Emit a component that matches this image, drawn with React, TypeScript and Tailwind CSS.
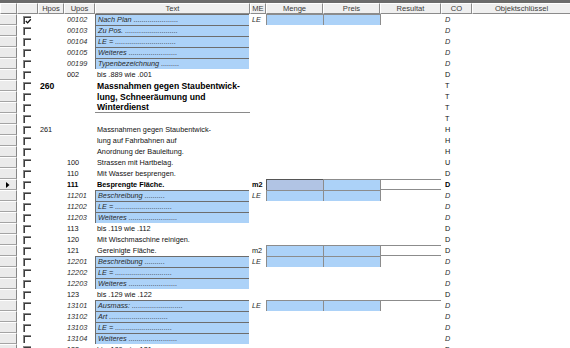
import React from 'react';

type Kind = 'input' | 'plain' | 'bold' | 'heading' | 'empty';
type Sty = 'italic' | 'normal' | 'bold';
interface Row {
  chk?: boolean;
  sel?: boolean;
  hpos?: string;
  hposBold?: boolean;
  upos?: string;
  uposStyle?: Sty;
  text?: string;
  kind: Kind;
  underline?: boolean;
  me?: string;
  meStyle?: Sty;
  fields?: boolean;
  focused?: boolean;
  result?: 'left' | 'box' | 'topleft';
  co: string;
  coStyle: Sty;
}

const d = (n: number) => '.'.repeat(n);

const rows: Row[] = [
  { chk: true, upos: '00102', uposStyle: 'italic', text: 'Nach Plan ' + d(22), kind: 'input', me: 'LE', meStyle: 'italic', fields: true, result: 'left', co: 'D', coStyle: 'italic' },
  { upos: '00103', uposStyle: 'italic', text: 'Zu Pos. ' + d(26), kind: 'input', co: 'D', coStyle: 'italic' },
  { upos: '00104', uposStyle: 'italic', text: 'LE = ' + d(30), kind: 'input', co: 'D', coStyle: 'italic' },
  { upos: '00105', uposStyle: 'italic', text: 'Weiteres ' + d(24), kind: 'input', co: 'D', coStyle: 'italic' },
  { upos: '00199', uposStyle: 'italic', text: 'Typenbezeichnung ' + d(9), kind: 'input', co: 'D', coStyle: 'italic' },
  { upos: '002', uposStyle: 'normal', text: 'bis .889 wie .001', kind: 'plain', co: 'D', coStyle: 'normal' },
  { hpos: '260', hposBold: true, text: 'Massnahmen gegen Staubentwick-', kind: 'heading', co: 'T', coStyle: 'normal' },
  { text: 'lung, Schneeräumung und', kind: 'heading', co: 'T', coStyle: 'normal' },
  { text: 'Winterdienst', kind: 'heading', underline: true, co: 'T', coStyle: 'normal' },
  { kind: 'empty', co: 'T', coStyle: 'normal' },
  { hpos: '261', text: 'Massnahmen gegen Staubentwick-', kind: 'plain', co: 'H', coStyle: 'normal' },
  { text: 'lung auf Fahrbahnen auf', kind: 'plain', co: 'H', coStyle: 'normal' },
  { text: 'Anordnung der Bauleitung.', kind: 'plain', co: 'H', coStyle: 'normal' },
  { upos: '100', uposStyle: 'normal', text: 'Strassen mit Hartbelag.', kind: 'plain', co: 'U', coStyle: 'normal' },
  { upos: '110', uposStyle: 'normal', text: 'Mit Wasser besprengen.', kind: 'plain', co: 'D', coStyle: 'normal' },
  { sel: true, upos: '111', uposStyle: 'bold', text: 'Besprengte Fläche.', kind: 'bold', me: 'm2', meStyle: 'bold', fields: true, focused: true, result: 'box', co: 'D', coStyle: 'bold' },
  { upos: '11201', uposStyle: 'italic', text: 'Beschreibung ' + d(10), kind: 'input', me: 'LE', meStyle: 'italic', fields: true, result: 'left', co: 'D', coStyle: 'italic' },
  { upos: '11202', uposStyle: 'italic', text: 'LE = ' + d(28), kind: 'input', co: 'D', coStyle: 'italic' },
  { upos: '11203', uposStyle: 'italic', text: 'Weiteres ' + d(24), kind: 'input', co: 'D', coStyle: 'italic' },
  { upos: '113', uposStyle: 'normal', text: 'bis .119 wie .112', kind: 'plain', co: 'D', coStyle: 'normal' },
  { upos: '120', uposStyle: 'normal', text: 'Mit Wischmaschine reinigen.', kind: 'plain', co: 'D', coStyle: 'normal' },
  { upos: '121', uposStyle: 'normal', text: 'Gereinigte Fläche.', kind: 'plain', me: 'm2', meStyle: 'normal', fields: true, result: 'box', co: 'D', coStyle: 'normal' },
  { upos: '12201', uposStyle: 'italic', text: 'Beschreibung ' + d(10), kind: 'input', me: 'LE', meStyle: 'italic', fields: true, result: 'left', co: 'D', coStyle: 'italic' },
  { upos: '12202', uposStyle: 'italic', text: 'LE = ' + d(28), kind: 'input', co: 'D', coStyle: 'italic' },
  { upos: '12203', uposStyle: 'italic', text: 'Weiteres ' + d(24), kind: 'input', co: 'D', coStyle: 'italic' },
  { upos: '123', uposStyle: 'normal', text: 'bis .129 wie .122', kind: 'plain', co: 'D', coStyle: 'normal' },
  { upos: '13101', uposStyle: 'italic', text: 'Ausmass: ' + d(25), kind: 'input', me: 'LE', meStyle: 'italic', fields: true, result: 'topleft', co: 'D', coStyle: 'italic' },
  { upos: '13102', uposStyle: 'italic', text: 'Art ' + d(29), kind: 'input', co: 'D', coStyle: 'italic' },
  { upos: '13103', uposStyle: 'italic', text: 'LE = ' + d(28), kind: 'input', co: 'D', coStyle: 'italic' },
  { upos: '13104', uposStyle: 'italic', text: 'Weiteres ' + d(24), kind: 'input', co: 'D', coStyle: 'italic' },
  { upos: '132', uposStyle: 'normal', text: 'bis .189 wie .131', kind: 'plain', co: 'D', coStyle: 'normal' },
];

const styCls = (s?: Sty) =>
  s === 'italic' ? 'italic text-[#2e2e2e]' : s === 'bold' ? 'font-bold text-black' : 'text-[#111]';

function Checkbox({ checked }: { checked?: boolean }) {
  return (
    <div className="ml-[6px] w-[8px] h-[8px] border-t border-l border-[#8a8a8a] bg-white">
      <div className="w-full h-full border-t border-l border-[#3c3c3c] relative">
        {checked && (
          <svg width="7" height="7" viewBox="0 0 7 7" className="absolute left-0 top-0">
            <path d="M0.8 3 L2.6 4.9 L5.8 1.2" fill="none" stroke="#111" strokeWidth="1.3" />
          </svg>
        )}
      </div>
    </div>
  );
}

function HeaderCell({ w, label, last }: { w: string; label?: string; last?: boolean }) {
  return (
    <div
      className={`${w} h-full bg-[#efefef] border-t border-l border-t-white border-l-white ${last ? '' : 'border-r'} border-b border-r-[#8b8b8b] border-b-[#8b8b8b] flex items-center justify-center text-[7.6px] leading-[10px] text-[#3a3a3a]`}
    >
      {label}
    </div>
  );
}

function DataRow({ r }: { r: Row }) {
  return (
    <div className="flex h-[11px] text-[7.3px] leading-[10px]">
      <div className="w-[17px] h-full shrink-0 bg-[#ebebeb] border-t border-t-white border-r border-b border-r-[#858585] border-b-[#a4a4a4] flex items-center pl-[6px]">
        {r.sel && (
          <svg width="4" height="6" viewBox="0 0 4 6">
            <polygon points="0,0 3.5,3 0,6" fill="#000" />
          </svg>
        )}
      </div>
      <div className="w-[21px] h-full shrink-0 bg-white flex items-center">
        <Checkbox checked={r.chk} />
      </div>
      <div
        className={`w-[26px] h-full shrink-0 pl-[2px] flex items-center ${r.hposBold ? 'font-bold text-[8.6px] text-black' : 'text-[#111]'}`}
      >
        {r.hpos}
      </div>
      <div className={`w-[31px] h-full shrink-0 pl-[3px] flex items-center ${styCls(r.uposStyle)}`}>{r.upos}</div>
      <div className="w-[155px] h-full shrink-0">
        {r.kind === 'input' && (
          <div className="w-[154px] h-full bg-[#acd2f8] border-t border-l border-[#6d6d6d] pl-[2px] flex items-center italic text-[#2a2a2a] whitespace-nowrap overflow-hidden">
            {r.text}
          </div>
        )}
        {r.kind === 'plain' && (
          <div className="h-full pl-[2px] flex items-center text-[#111] whitespace-nowrap">{r.text}</div>
        )}
        {r.kind === 'bold' && (
          <div className="h-full pl-[2px] flex items-center font-bold text-black whitespace-nowrap">{r.text}</div>
        )}
        {r.kind === 'heading' && (
          <div
            className={`h-full pl-[2px] flex items-center font-bold text-[8.6px] text-black whitespace-nowrap ${r.underline ? 'border-b border-[#8a8a8a]' : ''}`}
          >
            {r.text}
          </div>
        )}
      </div>
      <div className={`w-[16px] h-full shrink-0 pl-[2px] flex items-center ${styCls(r.meStyle)}`}>{r.me}</div>
      <div className="w-[57px] h-full shrink-0">
        {r.fields &&
          (r.focused ? (
            <div className="w-full h-full bg-[#b1c4e4] border-t border-l border-[#555555]" />
          ) : (
            <div className="w-full h-full bg-[#acd2f8] border-t border-l border-[#8c8c8c]" />
          ))}
      </div>
      <div className="w-[57px] h-full shrink-0">
        {r.fields && <div className="w-full h-full bg-[#acd2f8] border-t border-l border-[#8c8c8c]" />}
      </div>
      <div className="w-[61px] h-full shrink-0">
        {r.result === 'left' && <div className="w-full h-full border-l border-[#8c8c8c]" />}
        {r.result === 'box' && <div className="w-full h-full border-l border-t border-b border-[#8c8c8c] bg-white" />}
        {r.result === 'topleft' && <div className="w-full h-full border-l border-t border-[#8c8c8c]" />}
      </div>
      <div className={`w-[31px] h-full shrink-0 pl-[4px] flex items-center ${styCls(r.coStyle)}`}>{r.co}</div>
      <div className="flex-1 h-full" />
    </div>
  );
}

export default function App() {
  return (
    <div className="w-[570px] h-[348px] overflow-hidden bg-white font-['Liberation_Sans',Arial,sans-serif]">
      <div className="h-[3px] bg-[#6b6b6b]" />
      <div className="flex h-[11px]">
        <HeaderCell w="w-[17px]" />
        <HeaderCell w="w-[21px]" />
        <HeaderCell w="w-[26px]" label="Hpos" />
        <HeaderCell w="w-[31px]" label="Upos" />
        <HeaderCell w="w-[155px]" label="Text" />
        <HeaderCell w="w-[16px]" label="ME" />
        <HeaderCell w="w-[57px]" label="Menge" />
        <HeaderCell w="w-[57px]" label="Preis" />
        <HeaderCell w="w-[61px]" label="Resultat" />
        <HeaderCell w="w-[31px]" label="CO" />
        <HeaderCell w="flex-1" label="Objektschlüssel" last />
      </div>
      {rows.map((r, i) => (
        <DataRow key={i} r={r} />
      ))}
    </div>
  );
}
